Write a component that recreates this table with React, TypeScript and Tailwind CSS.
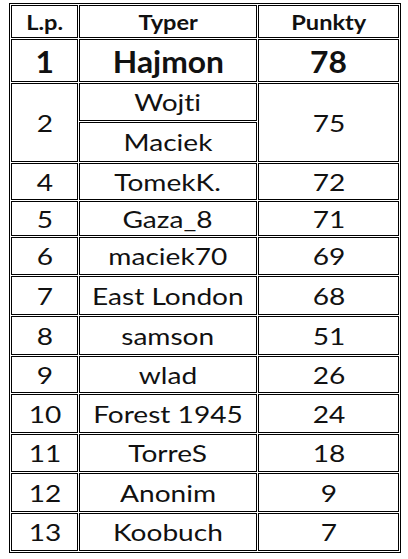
import React from "react";

type Row = { lp?: string; name: string; pts?: string; h: string; lpSpan?: number };

const rows: Row[] = [
  { lp: "2", name: "Wojti", pts: "75", h: "h-[38px]", lpSpan: 2 },
  { name: "Maciek", h: "h-[40px]" },
  { lp: "4", name: "TomekK.", pts: "72", h: "h-[37px]" },
  { lp: "5", name: "Gaza_8", pts: "71", h: "h-[35px]" },
  { lp: "6", name: "maciek70", pts: "69", h: "h-[38px]" },
  { lp: "7", name: "East London", pts: "68", h: "h-[39px]" },
  { lp: "8", name: "samson", pts: "51", h: "h-[39px]" },
  { lp: "9", name: "wlad", pts: "26", h: "h-[37px]" },
  { lp: "10", name: "Forest 1945", pts: "24", h: "h-[39px]" },
  { lp: "11", name: "TorreS", pts: "18", h: "h-[38px]" },
  { lp: "12", name: "Anonim", pts: "9", h: "h-[39px]" },
  { lp: "13", name: "Koobuch", pts: "7", h: "h-[38px]" },
];

const cell = "border border-black p-0 text-center align-middle";

function T({ children, s }: { children: React.ReactNode; s: string }) {
  return <span className={`inline-block ${s}`}>{children}</span>;
}

export default function App() {
  return (
    <div className="w-[408px] h-[559px] bg-white pt-[3px] pl-[9px] font-['Lato',sans-serif] text-[#111] [font-variant-ligatures:none]">
      <table className="border-separate border-spacing-[1px] border border-black w-[392px] table-fixed">
        <colgroup>
          <col className="w-[67px]" />
          <col className="w-[178px]" />
          <col className="w-[141px]" />
        </colgroup>
        <tbody>
          <tr className="h-[33px] text-[20px] font-bold leading-none">
            <td className={cell}><T s="scale-x-[1.18]">L.p.</T></td>
            <td className={cell}><T s="scale-x-[1.18]">Typer</T></td>
            <td className={cell}><T s="scale-x-[1.18]">Punkty</T></td>
          </tr>
          <tr className="h-[43px] text-[30px] font-bold leading-none">
            <td className={cell}><T s="scale-x-[1.06]">1</T></td>
            <td className={cell}><T s="scale-x-[1.06]">Hajmon</T></td>
            <td className={cell}><T s="scale-x-[1.06]">78</T></td>
          </tr>
          {rows.map((r, i) => (
            <tr key={i} className={`${r.h} text-[24px] font-normal leading-none`}>
              {r.lp !== undefined && (
                <td className={cell} rowSpan={r.lpSpan}>
                  <T s="scale-x-[1.17]">{r.lp}</T>
                </td>
              )}
              <td className={cell}><T s="scale-x-[1.17]">{r.name}</T></td>
              {r.pts !== undefined && (
                <td className={cell} rowSpan={r.lpSpan}>
                  <T s="scale-x-[1.17]">{r.pts}</T>
                </td>
              )}
            </tr>
          ))}
        </tbody>
      </table>
    </div>
  );
}
